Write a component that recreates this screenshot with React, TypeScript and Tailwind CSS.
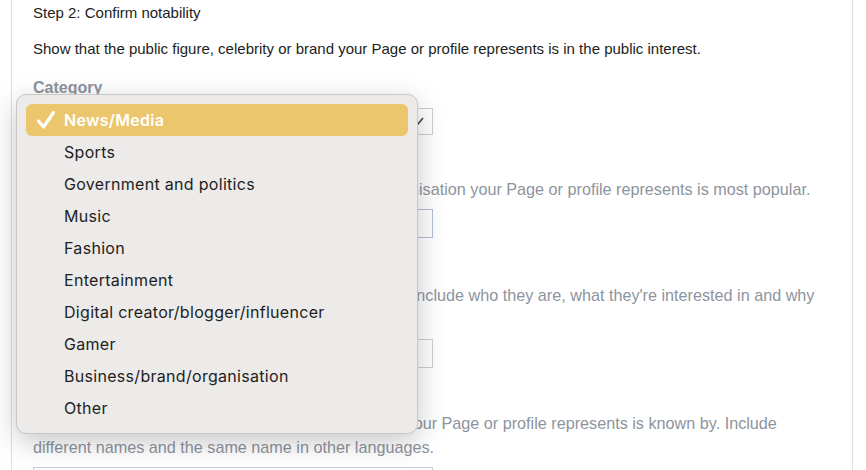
import React from 'react'

const items = [
  'News/Media',
  'Sports',
  'Government and politics',
  'Music',
  'Fashion',
  'Entertainment',
  'Digital creator/blogger/influencer',
  'Gamer',
  'Business/brand/organisation',
  'Other',
]

const Field = ({
  label,
  lines,
  gap,
  focused,
}: {
  label: string
  lines: string[]
  gap: string
  focused?: boolean
}) => (
  <div className={gap}>
    <div className="text-[16px] font-bold leading-[20px] text-[#8d949e]">{label}</div>
    <div className="mt-0.5 text-[16.2px] leading-[24px] text-[#8d949e]">
      {lines.map((l) => (
        <div key={l} className="whitespace-nowrap">
          {l}
        </div>
      ))}
    </div>
    <div
      className={
        focused
          ? 'mt-2 h-[29px] w-[400px] border border-[#b4bfdc] bg-white'
          : 'mt-2 h-[29px] w-[400px] border border-[#ccd0d5] bg-white'
      }
    />
  </div>
)

const Dropdown = () => (
  <div className="absolute left-[16px] top-[94px] w-[402px] rounded-[10px] border border-[#c9c7c5] bg-[#ecebe9] px-[9px] pt-[9px] pb-[9px] shadow-[0_8px_28px_rgba(0,0,0,0.22)] font-['Inter',sans-serif] text-[16px] tracking-[0.3px] text-[#222]">
    {items.map((it, i) => (
      <div
        key={it}
        className={
          i === 0
            ? 'flex h-8 items-center rounded-[6px] bg-[#ecc66c] font-semibold text-white'
            : 'flex h-8 items-center'
        }
      >
        <div className="flex w-[38px] shrink-0 items-center justify-center pl-[2px]">
          {i === 0 && (
            <svg width="20" height="20" viewBox="0 0 20 20" fill="none">
              <path d="M2.5 11 L7.5 17 L17.5 2.5" stroke="white" strokeWidth="3.2" strokeLinecap="round" strokeLinejoin="round" />
            </svg>
          )}
        </div>
        <span>{it}</span>
      </div>
    ))}
  </div>
)

export default function App() {
  return (
    <div className="relative h-[470px] w-[866px] overflow-hidden bg-white font-['Liberation_Sans',Arial,sans-serif]">
      <div className="ml-[11px] h-full w-[842px] border-x border-[#dddfe2] px-[21px] pt-[4px]">
        <div className="text-[15px] leading-[18px] text-[#1c1e21]">Step 2: Confirm notability</div>
        <div className="mt-[18px] text-[15px] leading-[18px] text-[#1c1e21]">
          Show that the public figure, celebrity or brand your Page or profile represents is in the public interest.
        </div>
        <div className="mt-[20px] text-[16px] font-bold leading-[20px] text-[#8d949e]">Category</div>
        <div className="relative mt-[10px] h-[27px] w-[400px] border border-[#ccd0d5] bg-white">
          <svg className="absolute right-[8px] top-[7px]" width="12" height="10" viewBox="0 0 12 10" fill="none">
            <path d="M1 2 L6 8 L11 2" stroke="#444" strokeWidth="1.6" />
          </svg>
        </div>
        <Field
          gap="mt-[20px]"
          focused
          label="Country/region"
          lines={['Enter the country or region where the person or organisation your Page or profile represents is most popular.']}
        />
        <Field
          gap="mt-[23px]"
          label="Audience (optional)"
          lines={[
            "Describe the people who follow your Page or profile. Include who they are, what they're interested in and why",
            'they follow you.',
          ]}
        />
        <Field
          gap="mt-[21px]"
          label="Also known as (optional)"
          lines={[
            'List all of the names that the person or organisation your Page or profile represents is known by. Include',
            'different names and the same name in other languages.',
          ]}
        />
      </div>
      <Dropdown />
    </div>
  )
}
